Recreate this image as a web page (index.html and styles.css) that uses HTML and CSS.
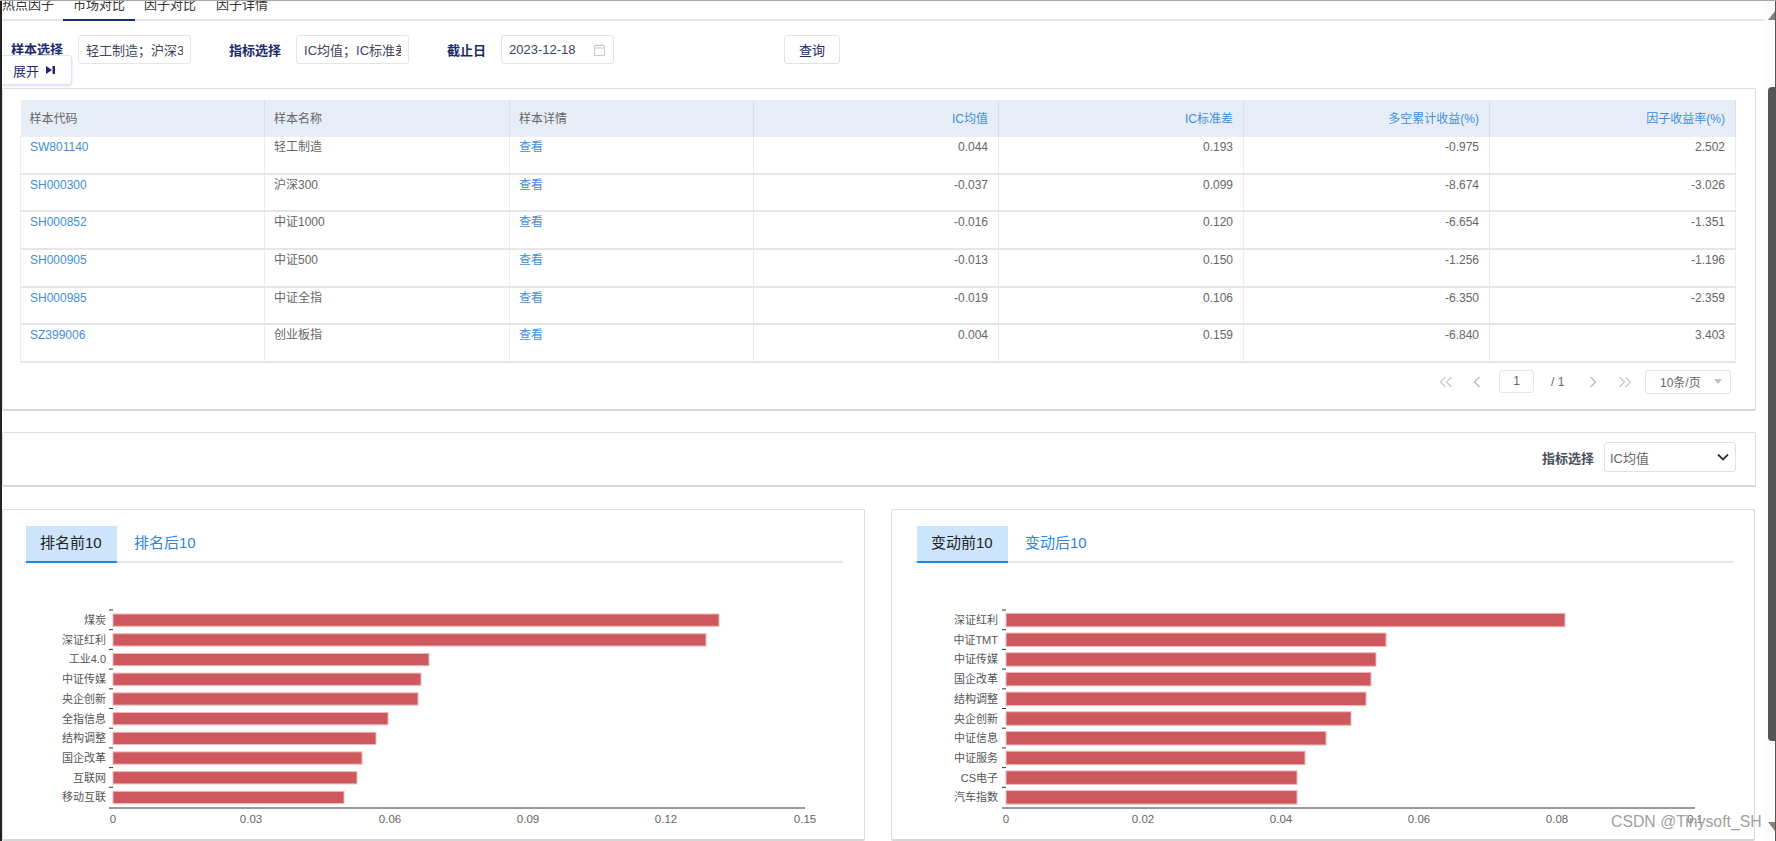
FILE: index.html
```html
<!DOCTYPE html>
<html lang="zh-CN">
<head>
<meta charset="utf-8">
<title>市场对比</title>
<link rel="stylesheet" href="styles.css">
</head>
<body>
<div class="window">
  <main class="page">
    <nav class="tabs">
      <span class="tab tab-first">热点因子</span>
      <span class="tab tab-active">市场对比</span>
      <span class="tab tab-third">因子对比</span>
      <span class="tab">因子详情</span>
    </nav>

    <section class="filters">
      <span class="f-label f-sample">样本选择</span>
      <div class="field f-w1"><span class="clip">轻工制造；沪深300</span></div>
      <span class="f-label f-metric">指标选择</span>
      <div class="field f-w1"><span class="clip">IC均值；IC标准差</span></div>
      <span class="f-label f-date">截止日</span>
      <div class="field f-w2">2023-12-18
        <svg class="cal" width="13" height="12" viewBox="0 0 13 12"><path d="M1.5 1.5h10v10h-10zM1.5 4h10M4 0v2M9 0v2" fill="none" stroke="#c8c8c8"/></svg>
      </div>
      <button class="btn-query">查询</button>
      <div class="expand">展开
        <svg width="9" height="8" viewBox="0 0 9 8"><path d="M0 0l6 4-6 4zM6.500 0H9v8H6.500z" fill="#1b2a6b"/></svg>
      </div>
    </section>

    <section class="card card-table">
      <table class="grid">
        <thead>
          <tr><th>样本代码</th><th>样本名称</th><th>样本详情</th><th class="num">IC均值</th><th class="num">IC标准差</th><th class="num">多空累计收益(%)</th><th class="num">因子收益率(%)</th></tr>
        </thead>
        <tbody>
          <tr><td class="link">SW801140</td><td>轻工制造</td><td class="link">查看</td><td class="num">0.044</td><td class="num">0.193</td><td class="num">-0.975</td><td class="num">2.502</td></tr>
          <tr><td class="link">SH000300</td><td>沪深300</td><td class="link">查看</td><td class="num">-0.037</td><td class="num">0.099</td><td class="num">-8.674</td><td class="num">-3.026</td></tr>
          <tr><td class="link">SH000852</td><td>中证1000</td><td class="link">查看</td><td class="num">-0.016</td><td class="num">0.120</td><td class="num">-6.654</td><td class="num">-1.351</td></tr>
          <tr><td class="link">SH000905</td><td>中证500</td><td class="link">查看</td><td class="num">-0.013</td><td class="num">0.150</td><td class="num">-1.256</td><td class="num">-1.196</td></tr>
          <tr><td class="link">SH000985</td><td>中证全指</td><td class="link">查看</td><td class="num">-0.019</td><td class="num">0.106</td><td class="num">-6.350</td><td class="num">-2.359</td></tr>
          <tr><td class="link">SZ399006</td><td>创业板指</td><td class="link">查看</td><td class="num">0.004</td><td class="num">0.159</td><td class="num">-6.840</td><td class="num">3.403</td></tr>
        </tbody>
      </table>
      <div class="pager">
        <svg class="pg-icon" width="14" height="12" viewBox="0 0 14 12"><path d="M6.5 1L1.5 6l5 5M12.500 1l-5 5 5 5" fill="none" stroke="#c4c7cc" stroke-width="1.200"/></svg>
        <svg class="pg-icon pg-prev" width="8" height="12" viewBox="0 0 8 12"><path d="M6.500 1l-5 5 5 5" fill="none" stroke="#b4b7bc" stroke-width="1.200"/></svg>
        <span class="pg-input">1</span>
        <span class="pg-total">/ 1</span>
        <svg class="pg-icon pg-next" width="8" height="12" viewBox="0 0 8 12"><path d="M1.500 1l5 5-5 5" fill="none" stroke="#b4b7bc" stroke-width="1.200"/></svg>
        <svg class="pg-icon pg-last" width="14" height="12" viewBox="0 0 14 12"><path d="M1.500 1l5 5-5 5M7.500 1l5 5-5 5" fill="none" stroke="#c4c7cc" stroke-width="1.200"/></svg>
        <span class="pg-size">10条/页<i class="caret"></i></span>
      </div>
    </section>

    <section class="card card-select">
      <span class="sel-label">指标选择</span>
      <div class="select">IC均值
        <svg width="12" height="8" viewBox="0 0 12 8"><path d="M1 1.500l5 5 5-5" fill="none" stroke="#333" stroke-width="1.800"/></svg>
      </div>
    </section>

    <section class="charts">
      <article class="card chart-card chart-left">
        <div class="subtabs">
          <span class="subtab subtab-on">排名前10</span>
          <span class="subtab">排名后10</span>
        </div>
        <svg class="plot" width="861" height="276" viewBox="3 563 861 276">
          <g class="ticks">
            <path d="M109 610h4M109 629.700h4M109 649.400h4M109 669.100h4M109 688.800h4M109 708.500h4M109 728.200h4M109 747.900h4M109 767.600h4M109 787.300h4"/>
          </g>
          <g class="bars">
            <rect x="113" y="614" width="606" height="12.300"/>
            <rect x="113" y="633.700" width="593" height="12.300"/>
            <rect x="113" y="653.400" width="316" height="12.300"/>
            <rect x="113" y="673.100" width="308" height="12.300"/>
            <rect x="113" y="692.800" width="305" height="12.300"/>
            <rect x="113" y="712.500" width="275" height="12.300"/>
            <rect x="113" y="732.200" width="263" height="12.300"/>
            <rect x="113" y="751.900" width="249" height="12.300"/>
            <rect x="113" y="771.600" width="244" height="12.300"/>
            <rect x="113" y="791.300" width="231" height="12.300"/>
          </g>
          <path class="axis" d="M109 808H805"/>
          <g class="ylabels">
            <text x="106" y="624">煤炭</text>
            <text x="106" y="643.700">深证红利</text>
            <text x="106" y="663.400">工业4.0</text>
            <text x="106" y="683.100">中证传媒</text>
            <text x="106" y="702.800">央企创新</text>
            <text x="106" y="722.500">全指信息</text>
            <text x="106" y="742.200">结构调整</text>
            <text x="106" y="761.900">国企改革</text>
            <text x="106" y="781.600">互联网</text>
            <text x="106" y="801.300">移动互联</text>
          </g>
          <g class="xlabels">
            <text x="113" y="823">0</text>
            <text x="251" y="823">0.03</text>
            <text x="390" y="823">0.06</text>
            <text x="528" y="823">0.09</text>
            <text x="666" y="823">0.12</text>
            <text x="805" y="823">0.15</text>
          </g>
        </svg>
      </article>
      <article class="card chart-card chart-right">
        <div class="subtabs">
          <span class="subtab subtab-on">变动前10</span>
          <span class="subtab">变动后10</span>
        </div>
        <svg class="plot" width="862" height="276" viewBox="892 563 862 276">
          <g class="ticks">
            <path d="M1002 610h4M1002 629.700h4M1002 649.400h4M1002 669.100h4M1002 688.800h4M1002 708.500h4M1002 728.200h4M1002 747.900h4M1002 767.600h4M1002 787.300h4"/>
          </g>
          <g class="bars">
            <rect x="1006" y="613.300" width="559" height="13.500"/>
            <rect x="1006" y="633" width="380" height="13.500"/>
            <rect x="1006" y="652.700" width="370" height="13.500"/>
            <rect x="1006" y="672.400" width="365" height="13.500"/>
            <rect x="1006" y="692.100" width="360" height="13.500"/>
            <rect x="1006" y="711.800" width="345" height="13.500"/>
            <rect x="1006" y="731.500" width="320" height="13.500"/>
            <rect x="1006" y="751.200" width="299" height="13.500"/>
            <rect x="1006" y="770.900" width="291" height="13.500"/>
            <rect x="1006" y="790.600" width="291" height="13.500"/>
          </g>
          <path class="axis" d="M1002 808H1695"/>
          <g class="ylabels">
            <text x="998" y="624">深证红利</text>
            <text x="998" y="643.700">中证TMT</text>
            <text x="998" y="663.400">中证传媒</text>
            <text x="998" y="683.100">国企改革</text>
            <text x="998" y="702.800">结构调整</text>
            <text x="998" y="722.500">央企创新</text>
            <text x="998" y="742.200">中证信息</text>
            <text x="998" y="761.900">中证服务</text>
            <text x="998" y="781.600">CS电子</text>
            <text x="998" y="801.300">汽车指数</text>
          </g>
          <g class="xlabels">
            <text x="1006" y="823">0</text>
            <text x="1143" y="823">0.02</text>
            <text x="1281" y="823">0.04</text>
            <text x="1419" y="823">0.06</text>
            <text x="1557" y="823">0.08</text>
            <text x="1695" y="823">0.1</text>
          </g>
        </svg>
      </article>
    </section>
  </main>

  <aside class="scrollbar">
    <i class="sb-up"></i>
    <i class="sb-thumb"></i>
    <i class="sb-down"></i>
  </aside>
</div>
<div class="watermark">CSDN @Tinysoft_SH</div>
</body>
</html>
```
FILE: styles.css
```css
* { box-sizing: border-box; }
html, body { margin: 0; height: 841px; overflow: hidden; background: #fff; }
body {
  font-family: "Liberation Sans", "Noto Sans CJK SC", sans-serif;
  font-size: 12px;
  color: #666;
  position: relative;
}
.window {
  display: flex;
  height: 841px;
  border-top: 1px solid #a8a8a8;
}
.page {
  flex: 1;
  min-width: 0;
  height: 840px;
  overflow: hidden;
  border-left: 2px solid #222;
  padding-right: 8px;
}

/* top tabs */
.tabs {
  display: flex;
  height: 22px;
  margin-top: -4px;
  margin-right: -8px;
  box-sizing: content-box;
  border-bottom: 2px solid #e6e6e6;
}
.tab {
  height: 24px;
  padding: 0 10px;
  font-size: 13px;
  line-height: 16px;
  color: #333;
}
.tab-first { margin-left: -2px; padding: 0 9px 0 2px; }
.tab-active { border-bottom: 2px solid #1b2a6b; }
.tab-third { margin-left: -1px; }

/* filter bar */
.filters {
  position: relative;
  display: flex;
  align-items: center;
  height: 67px;
  padding: 0 0 10px 9px;
}
.f-label { font-size: 13px; font-weight: bold; color: #1b2a6b; white-space: nowrap; }
.f-sample { margin-right: 15px; position: relative; top: -1px; }
.f-metric { margin: 0 15px 0 38px; }
.f-date { margin: 0 15px 0 38px; }
.field {
  display: flex;
  align-items: center;
  height: 29px;
  padding: 0 7px;
  border: 1px solid #e3e5ea;
  border-radius: 3px;
  background: #fff;
  font-size: 13px;
  color: #3c4560;
  white-space: nowrap;
}
.clip { min-width: 0; overflow: hidden; }
.f-w1 { width: 113px; }
.f-w2 { width: 113px; justify-content: space-between; }
.btn-query {
  width: 56px;
  height: 29px;
  margin-left: 170px;
  padding: 0;
  border: 1px solid #e0e2e7;
  border-radius: 3px;
  background: #fff;
  font: inherit;
  font-size: 13px;
  color: #1b2a6b;
}
.expand {
  position: absolute;
  left: 0;
  top: 34px;
  display: flex;
  align-items: center;
  gap: 7px;
  width: 70px;
  height: 30px;
  padding-left: 11px;
  border: 1px solid #d9e6f5;
  border-left: 0;
  border-radius: 0 4px 4px 0;
  box-shadow: 0 1px 3px #cfe0f3;
  background: #fff;
  font-size: 13px;
  color: #1b2a6b;
}

/* cards */
.card {
  background: #fff;
  border: 1px solid #dcdcdc;
  border-bottom: 2px solid #d6d6d6;
  border-radius: 2px;
}
.card-table {
  height: 323px;
  padding: 11px 19px 0 17px;
}

/* table */
.grid {
  width: 1715px;
  table-layout: fixed;
  border-collapse: collapse;
}
.grid th {
  height: 36px;
  padding: 0 10px 0 9px;
  background: #e6edf6;
  border-right: 1px solid #d9dee6;
  font-weight: normal;
  text-align: left;
  color: #666;
}
.grid th.num { color: #3f8edc; text-align: right; }
.grid th:nth-child(1), .grid th:nth-child(3) { width: 244px; }
.grid th:nth-child(2), .grid th:nth-child(4), .grid th:nth-child(5) { width: 245px; }
.grid th:nth-child(6), .grid th:nth-child(7) { width: 246px; }
.grid td {
  height: 37.670px;
  padding: 2px 10px 0 9px;
  line-height: 16px;
  vertical-align: top;
  border: 1px solid #ebedf0;
  border-bottom: 2px solid #e4e6ea;
  color: #666;
}
.grid td.link { color: #3f8edc; }
.grid .num { text-align: right; }

/* pager */
.pager {
  display: flex;
  align-items: center;
  justify-content: flex-end;
  height: 24px;
  margin-top: 7px;
  padding-right: 5px;
  color: #666;
}
.pg-prev { margin-left: 20px; }
.pg-input {
  width: 35px;
  height: 23px;
  margin-left: 18px;
  border: 1px solid #e3e5ea;
  border-radius: 3px;
  text-align: center;
  line-height: 20px;
}
.pg-total { margin-left: 17px; width: 14px; white-space: nowrap; }
.pg-next { margin-left: 24px; }
.pg-last { margin-left: 21px; }
.pg-size {
  display: flex;
  align-items: center;
  width: 86px;
  height: 24px;
  margin-left: 13px;
  padding-left: 14px;
  border: 1px solid #e3e5ea;
  border-radius: 3px;
}
.caret {
  margin-left: 13px;
  border-left: 4.500px solid transparent;
  border-right: 4.500px solid transparent;
  border-top: 5px solid #bfc3c9;
}

/* metric selector */
.card-select {
  display: flex;
  align-items: center;
  justify-content: flex-end;
  gap: 10px;
  height: 55px;
  margin-top: 21px;
  padding: 0 19px 4px 0;
}
.sel-label { font-size: 13px; font-weight: bold; color: #4a4f5c; }
.select {
  display: flex;
  align-items: center;
  justify-content: space-between;
  width: 132px;
  height: 30px;
  padding: 0 6px 0 5px;
  border: 1px solid #e0e2e7;
  border-radius: 3px;
  font-size: 13px;
  color: #666;
}

/* chart cards */
.charts {
  display: flex;
  gap: 26px;
  margin-top: 22px;
}
.chart-card {
  height: 332px;
  padding-top: 16px;
}
.chart-left { width: 863px; }
.chart-right { width: 864px; }
.subtabs {
  display: flex;
  height: 37px;
  border-bottom: 2px solid #e3e6ec;
}
.chart-left .subtabs { margin: 0 21px 0 21px; padding-left: 2px; }
.chart-right .subtabs { margin: 0 21px 0 22px; padding-left: 3px; }
.subtab {
  height: 37px;
  padding: 0 14px;
  margin-right: 3px;
  font-size: 15px;
  line-height: 33px;
  color: #2f86dc;
}
.subtab-on {
  width: 91px;
  margin-right: 3px;
  background: #cce4fc;
  border-bottom: 2px solid #1e88e5;
  color: #222;
}
.plot { display: block; }
.ticks path { stroke: #333; stroke-width: 1; fill: none; }
.bars rect { fill: #cd595e; stroke: #eeb9bb; stroke-width: 1; }
.axis { stroke: #777; stroke-width: 1.500; fill: none; }
.ylabels text { font-size: 11px; fill: #555; text-anchor: end; }
.xlabels text { font-size: 11.500px; fill: #666; text-anchor: middle; }

/* scrollbar */
.scrollbar {
  display: flex;
  flex-direction: column;
  align-items: flex-end;
  width: 12px;
  height: 840px;
  background: #fbfbfb;
  border-right: 1px solid #555;
}
.sb-up {
  margin-top: 10px;
  border-left: 7px solid transparent;
  border-bottom: 9px solid #8a7f78;
}
.sb-thumb {
  width: 7px;
  height: 654px;
  margin-top: 67px;
  background: #555;
  border-radius: 4px 0 0 4px;
}
.sb-down {
  margin-top: 81px;
  border-left: 7px solid transparent;
  border-top: 9px solid #8a7f78;
}

.watermark {
  position: absolute;
  left: 1611px;
  top: 812px;
  font-size: 15.800px;
  line-height: 20px;
  color: #a0a0a0;
  white-space: nowrap;
}
```
